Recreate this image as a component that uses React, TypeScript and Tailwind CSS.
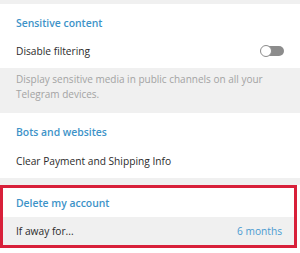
const font = { fontFamily: '"Open Sans", "Noto Sans", sans-serif' }

const Header = ({ text, className }: { text: string; className?: string }) => (
    <div className={`flex items-center text-[10.4px] font-semibold text-[#3d93c8] ${className ?? ""}`}>
        {text}
    </div>
)

const Toggle = () => (
    <div className="relative -mt-[3px] flex h-[12px] w-[24px] items-center">
        <div className="ml-[2px] h-[10px] w-[22px] rounded-full bg-[#8c8c8c]" />
        <div className="absolute left-0 top-0 h-[12px] w-[12px] rounded-full border-[1.5px] border-[#8c8c8c] bg-white" />
    </div>
)

export default function App() {
    return (
        <div className="h-[253px] w-[300px] overflow-hidden bg-[#f0f0f0]" style={font}>
            <div className="h-[4px]" />
            <div className="bg-white pb-[8px]">
                <Header text="Sensitive content" className="h-[36px] px-[16px] pt-[4px]" />
                <div className="flex h-[20px] items-center justify-between pl-[16px] pr-[16px] pt-[4px] text-[10.2px] text-[#2b2b2b]">
                    <span>Disable filtering</span>
                    <Toggle />
                </div>
            </div>
            <div className="h-[45px] px-[16px] pt-[4px] text-[10px] leading-[15px] text-[#a3a3a3]">
                Display sensitive media in public channels on all your Telegram devices.
            </div>
            <div className="bg-white pb-[8px]">
                <Header text="Bots and websites" className="h-[37px] px-[16px] pt-[3px]" />
                <div className="flex h-[20px] items-center px-[16px] pt-[3px] text-[10.2px] text-[#2b2b2b]">
                    Clear Payment and Shipping Info
                </div>
            </div>
            <div className="h-[7px]" />
            <div className="h-[68px] bg-white">
                <div className="w-[297px] border-[3px] border-[#d8203a]">
                    <Header text="Delete my account" className="h-[29px] pl-[13px] pt-[2px]" />
                    <div className="flex h-[28px] items-center justify-between bg-[#f0f0f0] pl-[13px] pr-[12px] pt-[2px] text-[10.2px]">
                        <span className="text-[#2b2b2b]">If away for...</span>
                        <span className="text-[#4a9bd1]">6 months</span>
                    </div>
                </div>
            </div>
        </div>
    )
}
